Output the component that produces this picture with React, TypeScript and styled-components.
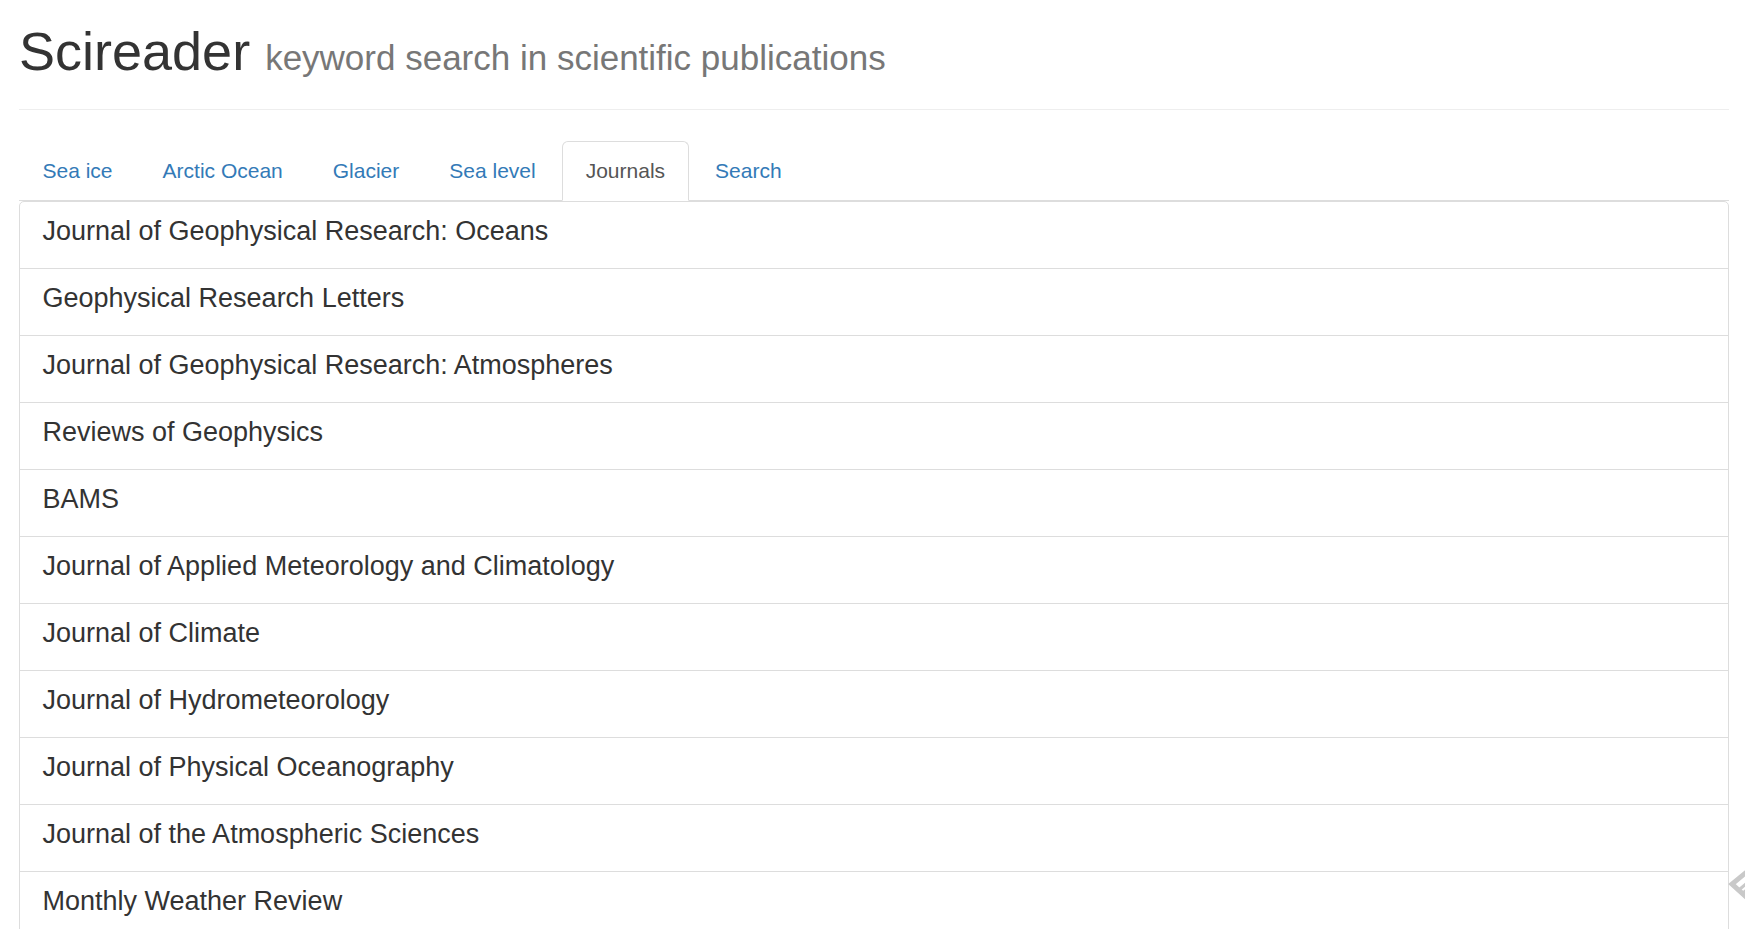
import React from "react";
import styled, { createGlobalStyle } from "styled-components";

const GlobalStyle = createGlobalStyle`
  html, body {
    margin: 0;
    padding: 0;
    background: #fff;
    overflow: hidden;
  }
  body {
    font-family: "Liberation Sans", Arial, Helvetica, sans-serif;
    color: #333;
  }
  * { box-sizing: border-box; }
`;

const Page = styled.div`
  padding: 0 16px 0 19px;
`;

const Header = styled.div`
  padding: 22px 0 28px;
  border-bottom: 1px solid #eee;
`;

const Title = styled.h1`
  margin: 0;
  height: 59px;
  font-size: 54px;
  line-height: 59px;
  font-weight: 400;
  color: #333;
  white-space: nowrap;
`;

const Subtitle = styled.small`
  font-size: 35px;
  line-height: 1;
  color: #777;
  font-weight: 400;
`;

const Tabs = styled.ul`
  list-style: none;
  margin: 31px 0 0;
  padding: 0;
  display: flex;
  border-bottom: 1px solid #ddd;
`;

const TabItem = styled.li`
  margin: 0 3px -1px 0;
`;

const TabLink = styled.a<{ $active?: boolean }>`
  display: block;
  padding: 14px 22.5px;
  font-size: 21px;
  line-height: 30px;
  border: 1px solid ${(p) => (p.$active ? "#ddd" : "transparent")};
  border-bottom-color: ${(p) => (p.$active ? "#fff" : "transparent")};
  border-radius: 6px 6px 0 0;
  background: ${(p) => (p.$active ? "#fff" : "transparent")};
  color: ${(p) => (p.$active ? "#555" : "#337ab7")};
  text-decoration: none;
  cursor: pointer;
`;

const List = styled.div`
  margin-top: 0;
`;

const ListItem = styled.div`
  padding: 11px 22.5px 19px;
  font-size: 27px;
  line-height: 36px;
  color: #333;
  background: #fff;
  border: 1px solid #ddd;
  margin-bottom: -1px;
  &:first-child {
    border-top-left-radius: 5px;
    border-top-right-radius: 5px;
  }
`;

const Widget = styled.div`
  position: fixed;
  right: 0;
  top: 864px;
  width: 17px;
  height: 42px;
  overflow: hidden;
`;

const tabs = ["Sea ice", "Arctic Ocean", "Glacier", "Sea level", "Journals", "Search"];

const journals = [
  "Journal of Geophysical Research: Oceans",
  "Geophysical Research Letters",
  "Journal of Geophysical Research: Atmospheres",
  "Reviews of Geophysics",
  "BAMS",
  "Journal of Applied Meteorology and Climatology",
  "Journal of Climate",
  "Journal of Hydrometeorology",
  "Journal of Physical Oceanography",
  "Journal of the Atmospheric Sciences",
  "Monthly Weather Review",
];

export default function App() {
  return (
    <>
      <GlobalStyle />
      <Page>
        <Header>
          <Title>
            Scireader <Subtitle>keyword search in scientific publications</Subtitle>
          </Title>
        </Header>
        <Tabs>
          {tabs.map((t) => (
            <TabItem key={t}>
              <TabLink $active={t === "Journals"}>{t}</TabLink>
            </TabItem>
          ))}
        </Tabs>
        <List>
          {journals.map((j) => (
            <ListItem key={j}>{j}</ListItem>
          ))}
        </List>
      </Page>
      <Widget>
        <svg width="17" height="42" viewBox="0 0 17 42">
          <path
            d="M26 2 L4 20 L26 40"
            fill="none"
            stroke="#c9c9c9"
            strokeWidth="5"
            strokeLinejoin="miter"
          />
          <path d="M12 25 L19 19 M15 29 L22 23" stroke="#c9c9c9" strokeWidth="3" />
        </svg>
      </Widget>
    </>
  );
}
